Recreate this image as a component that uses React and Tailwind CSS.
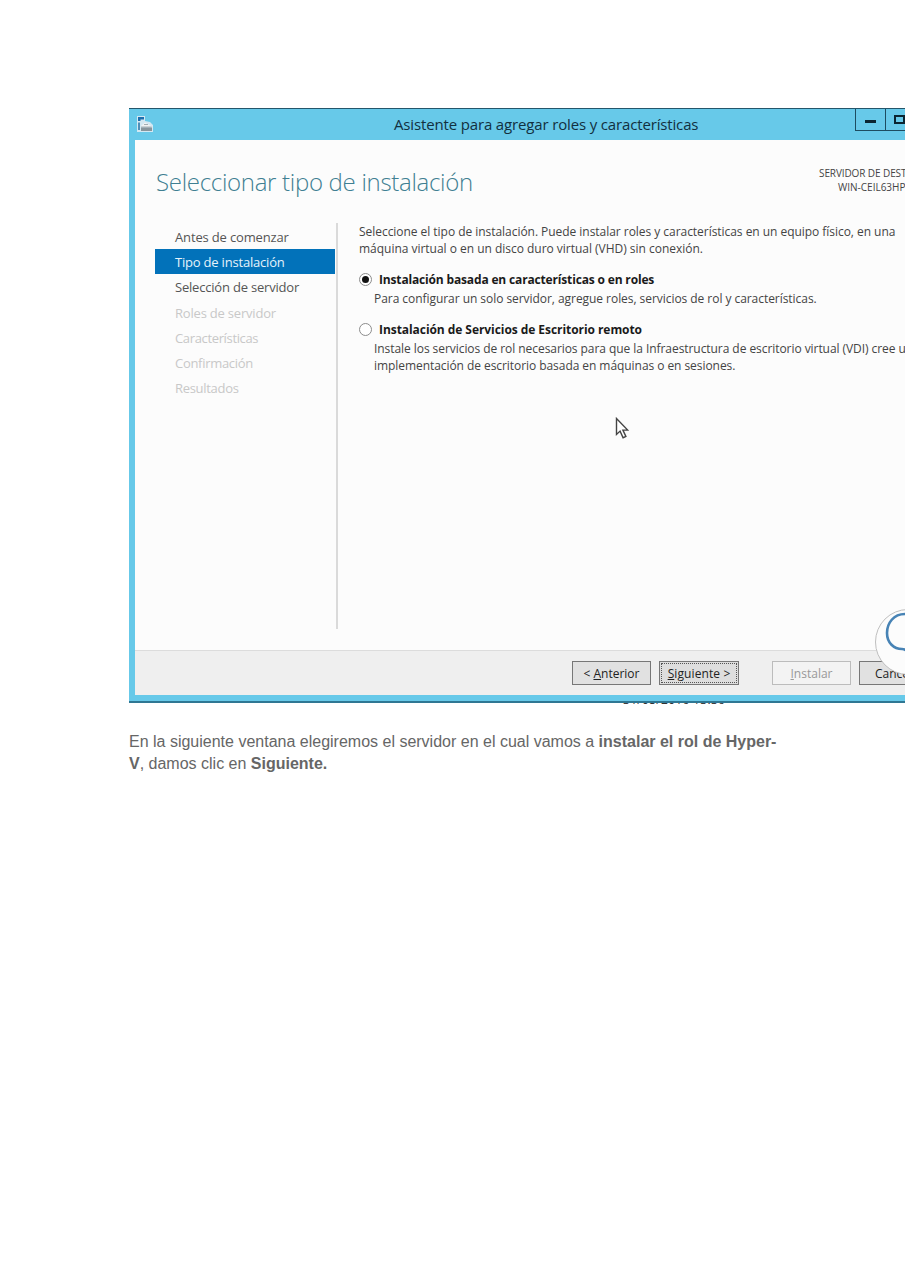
import React from 'react';
import clsx from 'clsx';

const steps = [
  { label: 'Antes de comenzar', state: 'done', track: 'tracking-[-0.15px]' },
  { label: 'Tipo de instalación', state: 'active', track: 'tracking-[-0.2px]' },
  { label: 'Selección de servidor', state: 'done', track: 'tracking-[-0.2px]' },
  { label: 'Roles de servidor', state: 'disabled', track: 'tracking-[-0.2px]' },
  { label: 'Características', state: 'disabled', track: 'tracking-[-0.35px]' },
  { label: 'Confirmación', state: 'disabled', track: 'tracking-[-0.3px]' },
  { label: 'Resultados', state: 'disabled', track: 'tracking-[-0.3px]' },
];

const ServerIcon = () => (
  <svg width="18" height="18" viewBox="0 0 18 18" className="shrink-0">
    <path d="M1 1h8v5l5 1 3 3v7H1z" fill="#d3e8f2" />
    <path d="M2 2h6v2.500H4.500V6H2z" fill="#1c6fae" />
    <path d="M2 7.500h2V15H2z" fill="#4f8fb8" />
    <path d="M5 11l4-3.500 6 3.500v1H5z" fill="#f1f3f4" />
    <path d="M8 9.500h4M5 12h10.500" stroke="#a5aeb3" />
    <path d="M5 12.500h11V16H5z" fill="#88959c" />
  </svg>
);

const TitleBar = () => (
  <div className="flex h-8 border-t border-[#24566b] pl-[7px]">
    <div className="flex w-[258px] items-start pt-[6px]">
      <ServerIcon />
    </div>
    <div className="w-[461px] whitespace-nowrap text-[15px] leading-[31px] tracking-[-0.15px] text-[#12303f]">
      Asistente para agregar roles y características
    </div>
    <div className="flex h-[22px] w-[50px] shrink-0 border-b border-l border-[#1d4c60]">
      <div className="flex w-[30px] shrink-0 items-center justify-center border-r border-[#1d4c60] pt-[4px]">
        <div className="h-[3px] w-[11px] bg-[#0b2531]" />
      </div>
      <div className="flex w-[19px] items-center overflow-hidden pl-[8px]">
        <div className="h-[9px] w-[11px] shrink-0 border-2 border-[#0b2531]" />
      </div>
    </div>
  </div>
);

const Steps = () => (
  <nav className="w-[181px] shrink-0 pt-[2px]">
    {steps.map((step) => (
      <div
        key={step.label}
        className={clsx(
          'mb-[0.2px] h-[25px] w-[180px] pl-[20px] text-[13px] leading-[27px] whitespace-nowrap',
          step.track,
          step.state === 'active' && 'bg-[#0272ba] text-[#e6f3fb]',
          step.state === 'done' && 'text-[#555]',
          step.state === 'disabled' && 'text-[#c8c8c8]'
        )}
      >
        {step.label}
      </div>
    ))}
  </nav>
);

const Radio = ({ checked }) => (
  <span className="flex h-[13px] w-[13px] shrink-0 items-center justify-center rounded-full border border-[#8c8c8c] bg-white">
    {checked && <span className="h-[7px] w-[7px] rounded-full bg-[#111]" />}
  </span>
);

const Cursor = () => (
  <svg width="14" height="24" viewBox="0 0 14 24" className="absolute top-[309px] left-[486px]">
    <path d="M1.500 1.500v16l3.600-3.400 3 6.600 2.800-1.300-3-6.300h4.800z" fill="#fff" stroke="#444" strokeWidth="1.4" />
  </svg>
);

const CloudBadge = () => (
  <svg width="31" height="68" viewBox="0 0 31 68" className="absolute top-[500px] left-[745px]">
    <circle cx="34" cy="34" r="32.5" fill="#fcfcfc" stroke="#bfbfbf" />
    <path d="M33 6C19 5 13 16 13 25c0 10 7 16 15 16 3 0 4 2 6 2" fill="none" stroke="#4783b5" strokeWidth="2.6" />
  </svg>
);

const Footer = () => (
  <div className="flex h-[45px] border-t border-[#dcdcdc] bg-[#efefef] pt-[10px] pl-[437px] text-[12px] leading-[23px] text-[#222]">
    <div className="mr-[8px] h-[24px] w-[79px] shrink-0 border border-[#777] bg-[#e1e1e1] text-center whitespace-nowrap">
      &lt; <u>A</u>nterior
    </div>
    <div className="mr-[33px] h-[24px] w-[80px] shrink-0 border border-[#777] bg-[#dedede] p-px">
      <div className="h-[20px] border border-dotted border-[#555] text-center leading-[19px] tracking-[0.1px] whitespace-nowrap">
        <u>S</u>iguiente &gt;
      </div>
    </div>
    <div className="mr-[8px] h-[24px] w-[79px] shrink-0 border border-[#bcbcbc] bg-[#f3f3f3] text-center text-[#999]">
      <u>I</u>nstalar
    </div>
    <div className="h-[24px] w-[79px] shrink-0 border border-[#777] bg-[#e1e1e1] pl-[15px]">Cance</div>
  </div>
);

const Wizard = () => (
  <div className="relative h-[595px] w-[776px] overflow-hidden bg-[#67c9e9] font-['Open_Sans','Noto_Sans',sans-serif]">
    <TitleBar />
    <div className="ml-[6px] h-[510px] bg-[#fcfcfc]">
      <header className="flex h-[82px] pl-[21px]">
        <h1 className="w-[640px] shrink-0 pt-[24px] text-[24px] leading-[36px] font-light tracking-[-0.3px] whitespace-nowrap text-[#3f7f92]">
          Seleccionar tipo de instalación
        </h1>
        <div className="pt-[26px] text-[10px] leading-[14px] whitespace-nowrap text-[#444]">
          <div className="pl-[23px] tracking-[-0.1px]">SERVIDOR DE DEST</div>
          <div className="pl-[42px]">WIN-CEIL63HP</div>
        </div>
      </header>
      <div className="flex pl-[20px]">
        <Steps />
        <div className="mt-px h-[406px] w-[2px] shrink-0 bg-[#dadada]" />
        <div className="pt-px pl-[21px] text-[12px] leading-[17px] whitespace-nowrap text-[#444]">
          <p className="tracking-[-0.04px]">Seleccione el tipo de instalación. Puede instalar roles y características en un equipo físico, en una</p>
          <p className="tracking-[-0.02px]">máquina virtual o en un disco duro virtual (VHD) sin conexión.</p>
          <div className="mt-[14px] flex items-center gap-[7px] font-bold text-[#1a1a1a]">
            <Radio checked />
            <span className="tracking-[-0.16px]">Instalación basada en características o en roles</span>
          </div>
          <p className="mt-[2px] pl-[15px] tracking-[-0.05px]">Para configurar un solo servidor, agregue roles, servicios de rol y características.</p>
          <div className="mt-[14px] flex items-center gap-[7px] font-bold text-[#1a1a1a]">
            <Radio />
            <span className="tracking-[-0.06px]">Instalación de Servicios de Escritorio remoto</span>
          </div>
          <p className="mt-[2px] pl-[15px] tracking-[-0.06px]">Instale los servicios de rol necesarios para que la Infraestructura de escritorio virtual (VDI) cree u</p>
          <p className="pl-[15px] tracking-[-0.06px]">implementación de escritorio basada en máquinas o en sesiones.</p>
        </div>
      </div>
    </div>
    <div className="ml-[6px]">
      <Footer />
    </div>
    <div className="h-[8px] border-b-2 border-[#2f7793]" />
    <Cursor />
    <CloudBadge />
  </div>
);

// bottom edge of the line of text hidden behind the window
const HiddenLine = () => (
  <div className="h-[2px] w-[776px] overflow-hidden pl-[494px] font-['Open_Sans',sans-serif] text-[12px] leading-[12px] text-[#333]">
    <div className="-mt-[9px] tracking-[0.3px]">31/05/2016 13:36</div>
  </div>
);

const App = () => (
  <main className="h-[1280px] w-[906px] overflow-hidden bg-white pt-[108px] pl-[129px]">
    <Wizard />
    <HiddenLine />
    <p className="mt-[26px] font-['Liberation_Sans',Arial,sans-serif] text-[16px] leading-[22px] whitespace-nowrap text-[#666]">
      En la siguiente ventana elegiremos el servidor en el cual vamos a <b>instalar el rol de Hyper-</b>
      <br />
      <b>V</b>, damos clic en <b>Siguiente.</b>
    </p>
  </main>
);

export default App;
